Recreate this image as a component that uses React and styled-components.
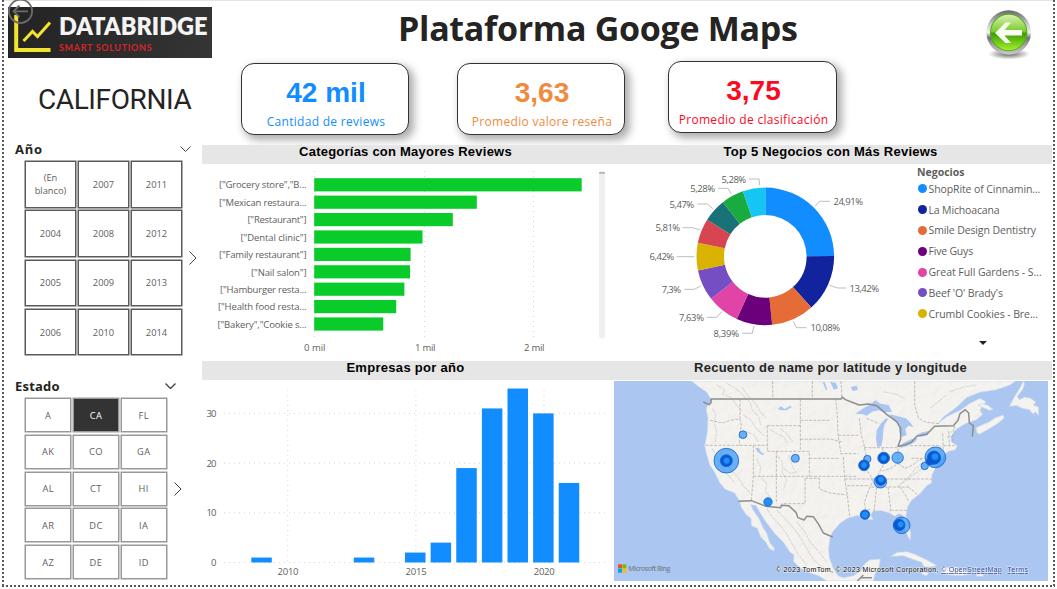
import React from "react";
import styled, { createGlobalStyle } from "styled-components";

const Global = createGlobalStyle`
  * { box-sizing: border-box; }
  body { margin: 0; background: #fff; overflow: hidden; font-family: "Open Sans", "Noto Sans", sans-serif; }
  svg { display: block; }
`;

const dots = (dir) =>
  `repeating-linear-gradient(to ${dir}, #5a5a5a 0 2px, transparent 2px 4px)`;

const Frame = styled.div`
  width: 1053px;
  height: 587px;
  margin-left: 2px;
  padding: 0 2px 2px;
  display: flex;
  flex-direction: column;
  background:
    ${dots("bottom")} left top / 2px 100% no-repeat,
    ${dots("bottom")} right top / 2px 100% no-repeat,
    ${dots("right")} left bottom / 100% 2px no-repeat,
    linear-gradient(#e4e4e4, #e4e4e4) left top / 100% 1px no-repeat;
`;

const Header = styled.header`
  height: 145px;
  flex: none;
  display: grid;
  grid-template-columns: 208px 1fr 84px;
`;
const Brand = styled.div`
  display: flex;
  flex-direction: column;
  padding: 7px 0 0 4px;
`;
const Logo = styled.div`
  position: relative;
  height: 51px;
  display: flex;
  padding-left: 5px;
  background: linear-gradient(100deg, #232323, #2b2b2b 50%, #353535);
`;
const LogoText = styled.div`
  padding: 5px 0 0 8px;
  display: flex;
  flex-direction: column;
  white-space: nowrap;
`;
const LogoName = styled.span`
  font: 800 23.5px/29px Lato, sans-serif;
  letter-spacing: 0;
  color: #f4f4f4;
`;
const LogoTag = styled.span`
  font: 700 9px/13px Lato, sans-serif;
  letter-spacing: 0.67px;
  color: #d3262b;
`;
const BackOverlay = styled.svg`
  position: absolute;
  left: -1px;
  top: -9px;
`;
const StateName = styled.div`
  margin: 25px 0 0 30px;
  font: 400 28px/34px Roboto, sans-serif;
  letter-spacing: -0.4px;
  color: #252423;
  white-space: nowrap;
`;
const Center = styled.div`
  display: flex;
  flex-direction: column;
`;
const Title = styled.h1`
  margin: 0 0 0 186px;
  height: 61px;
  font: 700 34px/57px "Open Sans", sans-serif;
  letter-spacing: -0.3px;
  color: #252423;
  white-space: nowrap;
`;
const Cards = styled.div`
  display: flex;
  padding-left: 29px;
`;
const Card = styled.div`
  width: ${(p) => p.$w || 168}px;
  height: 72px;
  margin: ${(p) => p.$top}px ${(p) => p.$gap}px 0 0;
  padding-left: 2px;
  border: 1px solid #333;
  border-radius: 13px;
  background: #fff;
  box-shadow: 4px 4px 9px 1px rgba(0, 0, 0, 0.33);
  color: ${(p) => p.$color};
  display: flex;
  flex-direction: column;
  align-items: center;
  white-space: nowrap;
`;
const CardValue = styled.div`
  margin-top: 12px;
  font: 700 28px/34px "Liberation Sans", sans-serif;
`;
const CardLabel = styled.div`
  font: 400 12px/24px "Open Sans", sans-serif;
  letter-spacing: 0.3px;
`;
const BackButton = styled.div`
  padding: 8px 0 0 17px;
`;

const Body = styled.div`
  flex: 1;
  display: flex;
`;
const Side = styled.aside`
  width: 198px;
  display: flex;
  flex-direction: column;
`;
const Slicer = styled.section`
  height: ${(p) => p.$h}px;
`;
const SlicerHead = styled.div`
  display: flex;
  align-items: center;
  justify-content: space-between;
  height: ${(p) => p.$h}px;
  padding: ${(p) => p.$pad};
  font: 700 13px/16px "Open Sans", sans-serif;
  letter-spacing: ${(p) => p.$ls}px;
  color: #252423;
`;
const SlicerRow = styled.div`
  display: flex;
  align-items: center;
  padding-left: 21px;
  gap: ${(p) => p.$gap}px;
`;
const Tiles = styled.div`
  display: grid;
  grid-template-columns: repeat(3, ${(p) => p.$w}px);
  grid-auto-rows: ${(p) => p.$h}px;
  gap: ${(p) => p.$gap};
`;
const Tile = styled.div`
  display: flex;
  align-items: center;
  justify-content: center;
  text-align: center;
  padding: 0 6px;
  border: 1px solid ${(p) => p.$line};
  box-shadow: 0 0 0 0.5px ${(p) => p.$line};
  background: ${(p) => (p.$on ? "#333" : "#fff")};
  color: ${(p) => (p.$on ? "#fff" : "#605e5c")};
  font: 400 9.3px/13px "Open Sans", sans-serif;
  letter-spacing: ${(p) => p.$ls || 0}px;
`;

const Main = styled.main`
  width: 850px;
  display: grid;
  grid-template-columns: 407px 443px;
  grid-template-rows: 216px 224px;
`;
const Panel = styled.section`
  display: flex;
  flex-direction: column;
  min-width: 0;
`;
const PanelTitle = styled.h2`
  margin: 0;
  height: 19px;
  flex: none;
  background: #e6e6e6;
  color: ${(p) => p.$color || "#000"};
  text-align: center;
  font: 700 13px/14px "Liberation Sans", sans-serif;
  letter-spacing: ${(p) => p.$ls}px;
  white-space: nowrap;
`;
const DonutRow = styled.div`
  display: flex;
`;
const Legend = styled.div`
  padding-top: 1px;
  width: 135px;
  color: #605e5c;
  white-space: nowrap;
`;
const LegendTitle = styled.div`
  font: 700 10.5px/14px "Open Sans", sans-serif;
  height: 13.5px;
`;
const LegendItem = styled.div`
  display: flex;
  align-items: center;
  gap: 1.5px;
  height: 20.8px;
  font: 400 10.5px/20px "Open Sans", sans-serif;
  letter-spacing: ${(p) => p.$ls || 0}px;
`;
const Dot = styled.span`
  width: 9px;
  height: 9px;
  margin-left: 1px;
  border-radius: 50%;
  background: ${(p) => p.$color};
`;
const More = styled.div`
  width: 0;
  margin: 17px 0 0 62px;
  border: 4.5px solid transparent;
  border-top-color: #252423;
  border-bottom-width: 0;
`;
const MapFrame = styled.div`
  padding: 1px 4px 0 5px;
`;
const ChartText = styled.text`
  font-family: "Open Sans", sans-serif;
  font-size: 9.5px;
  fill: #605e5c;
`;
const MapText = styled.text`
  font-family: "Liberation Sans", sans-serif;
  font-size: 21px;
  fill: ${(p) => p.$color || "#000"};
  paint-order: stroke;
  stroke: rgba(255, 255, 255, 0.75);
  stroke-width: 3px;
`;

const YEARS = ["(En blanco)", "2007", "2011", "2004", "2008", "2012", "2005", "2009", "2013", "2006", "2010", "2014"];
const STATES = ["A", "CA", "FL", "AK", "CO", "GA", "AL", "CT", "HI", "AR", "DC", "IA", "AZ", "DE", "ID"];

const CATS = [
  ['["Grocery store","B...', 581.7, 219],
  ['["Mexican restaura...', 476.8, 219],
  ['["Restaurant"]', 452.8, 247.5],
  ['["Dental clinic"]', 422.5, 240.5],
  ['["Family restaurant"]', 410.6, 219],
  ['["Nail salon"]', 410, 251],
  ['["Hamburger resta...', 404.4, 220],
  ['["Health food resta...', 396.2, 218],
  ['["Bakery","Cookie s...', 383.2, 217.5],
];

function BarChart() {
  return (
    <svg width="407" height="197" viewBox="202 164 407 197">
      {[[314.5, "0 mil", 304, 21.5], [424.5, "1 mil", 415, 20.5], [533.5, "2 mil", 524, 20.5]].map(([x, t, tx, w]) => (
        <g key={t}>
          <line x1={x} x2={x} y1="171" y2="339" stroke="#d6d6d6" strokeDasharray="1 4" />
          <ChartText x={tx} y="351" textLength={w}>{t}</ChartText>
        </g>
      ))}
      {CATS.map(([t, end, tx], i) => (
        <g key={t}>
          <rect x="314.2" y={178.2 + i * 17.4} width={end - 314.2} height="13.2" fill="#09cc2b" />
          <ChartText x={tx} y={188.3 + i * 17.45} textLength={306.5 - tx}>{t}</ChartText>
        </g>
      ))}
      <rect x="599" y="171" width="6" height="167.5" rx="3" fill="#efefef" />
      <rect x="599" y="172" width="6" height="1.8" rx="0.6" fill="#b3b3b3" />
    </svg>
  );
}

const SLICES = [
  [24.91, "#118DFF", 833.5, 29.5, 201.3, "815.3,206 819.3,201.3 830,201.3"],
  [13.42, "#12239E", 849.5, 29.5, 288.5, "829.3,285.3 837.7,288 846,288"],
  [10.08, "#E66C37", 810.5, 29.5, 327.7, "793.3,321.3 796.7,327.7 806.7,327.7"],
  [8.39, "#6B007B", 713.5, 25.5, 333.7, "754,326 752.3,333.3 742.3,333.3"],
  [7.63, "#E044A7", 679, 25, 317.3, "722,311.3 716.7,317.3 706.7,317.3"],
  [7.3, "#744EC2", 661.7, 19.3, 289.3, "700.7,286 694.3,289.3 684.3,289.3"],
  [6.42, "#D9B300", 649.5, 24.7, 256.7, "694.3,256.7 676.7,256.7"],
  [5.81, "#D64550", 655.5, 24.7, 227.7, "700,230 692.7,227.7 682.7,227.7"],
  [5.47, "#197278", 669.5, 24.7, 204.3, "713.3,209 707.3,204 697.3,204"],
  [5.28, "#1AAB40", 690.3, 24.7, 188.5, "731.3,194 728,188.3 718,188.3"],
  [5.28, "#15C6F4", 721.5, 24.7, 179.5, "759.7,185.3 759,179 749,179"],
];

function Donut() {
  const cx = 765.3, cy = 256.4, R = 68.8, r = 41.3;
  let acc = 0;
  const pt = (f, rad) => {
    const a = f * 2 * Math.PI;
    return `${(cx + rad * Math.sin(a)).toFixed(2)} ${(cy - rad * Math.cos(a)).toFixed(2)}`;
  };
  return (
    <svg width="308" height="197" viewBox="609 164 308 197">
      {SLICES.map(([v, color, tx, w, ty, line], i) => {
        const a = acc / 99.99;
        acc += v;
        const b = acc / 99.99;
        return (
          <g key={i}>
            <path d={`M${pt(a, R)}A${R} ${R} 0 0 1 ${pt(b, R)}L${pt(b, r)}A${r} ${r} 0 0 0 ${pt(a, r)}Z`} fill={color} />
            <polyline points={line} fill="none" stroke="#bdbdbd" />
            <ChartText x={tx} y={ty + 3.6} textLength={w}>{String(v).replace(".", ",") + "%"}</ChartText>
          </g>
        );
      })}
    </svg>
  );
}

const LEGEND = [
  ["ShopRite of Cinnamin...", "#118DFF", -0.1],
  ["La Michoacana", "#12239E", -0.15],
  ["Smile Design Dentistry", "#E66C37", -0.12],
  ["Five Guys", "#6B007B", -0.2],
  ["Great Full Gardens - S...", "#E044A7", -0.05],
  ["Beef 'O' Brady's", "#744EC2", -0.12],
  ["Crumbl Cookies - Bre...", "#D9B300", -0.08],
];

const COLUMNS = [[2009, 1], [2013, 1], [2015, 2], [2016, 4], [2017, 19], [2018, 31], [2019, 35], [2020, 30], [2021, 16]];

function ColumnChart() {
  return (
    <svg width="407" height="205" viewBox="202 380 407 205">
      {[0, 10, 20, 30].map((v) => {
        const y = 562.5 - v * 4.97;
        const w = v ? 10 : 5.5;
        return (
          <g key={v}>
            <line x1="224" x2="605" y1={y} y2={y} stroke="#d6d6d6" strokeDasharray="1 4" />
            <ChartText x={216.5 - w} y={y + 3.6} textLength={w}>{v}</ChartText>
          </g>
        );
      })}
      {[2010, 2015, 2020].map((v) => {
        const x = 287.8 + (v - 2010) * 25.62;
        return (
          <g key={v}>
            <line x1={x} x2={x} y1="390" y2="562" stroke="#d6d6d6" strokeDasharray="1 4" />
            <ChartText x={x - 10.3} y="575.3" textLength="21">{v}</ChartText>
          </g>
        );
      })}
      {COLUMNS.map(([yr, v]) => (
        <rect key={yr} x={251.3 + (yr - 2009) * 25.62} y={562.5 - v * 4.97} width="20.5" height={v * 4.97} fill="#118DFF" />
      ))}
    </svg>
  );
}

const LAND =
  "M244 78L262 92 290 112 300 128 305 140 292 152 288 165 294 190 291 235 284 272 290 300 299 330 314 352 328 382 345 403 374 414 388 438 394 458 409 480 423 490 424 512 442 520 452 546 468 562 477 580 492 588 493 580 479 562 471 536 458 515 448 492 430 466 422 449 438 452 452 476 464 496 482 520 498 540 520 562 540 592 552 600 550 618 565 635 592 652 625 662 650 678 790 678 796 655 808 634 811 612 780 614 764 626 752 648 730 662 700 668 684 662 670 640 658 606 656 580 660 550 668 530 690 505 712 490 740 482 760 484 775 493 790 494 782 480 790 468 815 467 838 474 855 484 866 476 880 482 880 510 887 530 896 548 902 556 902 532 892 500 888 480 893 455 905 436 930 416 950 392 965 384 966 360 976 340 990 320 1002 300 1014 290 1036 284 1042 272 1026 262 1022 245 1040 222 1066 206 1100 194 1118 178 1110 166 1120 150 1128 140 1110 130 1080 145 1050 166 1010 185 985 205 1000 186 1040 156 1070 128 1110 112 1160 104 1200 90 1218 78Z";
const ISLANDS = [
  "M1098 218L1120 208 1135 202 1156 188 1180 180 1182 190 1160 208 1130 226 1108 238 1100 232Z",
  "M1104 150L1120 146 1136 152 1150 164 1138 166 1120 158Z",
  "M1240 78L1230 98 1214 124 1198 154 1220 152 1236 160 1258 164 1270 178 1276 170 1286 182 1286 156 1270 150 1278 142 1262 130 1244 126 1228 134 1222 124 1238 104 1244 86Z",
  "M842 604L862 592 892 590 915 598 945 612 982 632 958 636 940 634 935 622 905 612 880 602 860 604Z",
  "M1000 638L1040 636 1068 646 1084 658 1050 662 1020 660 994 656Z",
  "M934 650L956 654 950 662 936 658Z",
  "M1098 656L1120 656 1120 664 1100 664Z",
];
const LAKES = [
  "M736 176L760 160 782 148 796 136 812 146 836 150 846 170 822 172 806 166 786 170 770 182 758 178Z",
  "M802 276L798 252 800 226 812 206 826 192 836 190 824 208 820 226 818 252 814 274Z",
  "M838 178L864 184 888 190 904 206 910 216 896 212 886 222 890 240 876 246 868 232 866 208 850 196Z",
  "M864 276L884 262 906 252 924 248 916 260 894 272 874 278Z",
  "M920 240L936 232 958 228 954 240 932 245Z",
  "M436 280L446 278 452 290 464 298 456 300 444 292Z",
  "M504 162L512 154 524 162 540 152 546 156 528 166 512 166Z",
  "M638 82L644 80 652 104 648 106Z",
  "M660 80L678 84 684 100 672 104Z",
  "M722 96L740 92 744 104 728 108Z",
  "M234 92L262 96 288 118 300 132 296 140 270 124 250 104Z",
];
const STATES_PATH =
  "M390 132V192M300 196L338 204 360 196 390 192 394 212 388 240V271M286 271H472M472 212V289M472 212H571M571 132V289M571 196H660M571 253L660 252 700 262M472 289H598V364M430 271V364L424 436M430 364H740M499 289V446M585 370V446H515M585 370H628V402L660 414 712 420M598 310H690M660 252M677 130L682 180 684 240 692 290M684 241H748M690 296H745M700 306L704 372 712 420 716 460 720 488M704 372H790M712 392H778M748 190L754 240 762 270 768 300 756 330 782 362 788 380 774 410 764 440 766 464H784M818 278V334L804 360M864 280V326L842 340 818 348M762 278H862M790 372H966M784 396H895M800 396L792 470M834 396L842 460 838 472M842 466H890M870 396L886 420 896 440M895 396L924 420M864 326L886 340 908 330 930 312 940 318 960 330M900 272H990L996 300M904 310H990M998 236L1000 290M1016 228L1018 270M1034 212L1026 262M1000 272H1034M488 78V132M607 78V132M693 78L696 130M914 78L914 150 926 190 948 202 990 206M770 190L808 206";
const RANGES =
  "M320 90L345 104 338 118 362 126 380 150 396 170M350 84L376 100 394 116 420 142 428 166 446 186 452 210M396 96L412 120 440 150 452 172 470 190M306 160L318 178 312 204 320 230 316 262M400 180L424 196 440 222 462 242M410 230L432 240 446 262M306 280L318 300 330 330 350 356 372 380M330 290L346 318 360 344 384 366 400 394 420 412M480 222L500 236 522 246 530 264M510 220L530 236 548 260M500 300L518 322 516 350 530 376 520 404M440 310L452 336 448 362 470 386 466 410 484 430M520 340L544 356 560 350M536 300L546 330 556 352M470 460L490 490 510 510 532 540 548 570 566 600 590 630M500 465L524 490 548 516 572 548 590 580 610 614 640 640M560 500L584 530 600 560 626 590 650 620M860 396L884 380 906 362 930 346 950 320M870 388L896 366 914 344 938 322M1010 250L1020 236 1036 216M960 160L984 140 1010 120M820 110L860 118 884 130M1020 110L1060 96 1100 90";
const US_CANADA =
  "M280 141L297 149 303 143 303 132H694L697 126 706 134 732 144 748 150 776 147 800 152 830 178 860 200 872 220 872 252 864 274 884 270 904 262 920 244 950 238 974 214 1030 212 1044 196 1050 176 1066 164 1076 174 1078 204 1090 212 1087 245";
const US_MEXICO =
  "M385 439L424 437 468 454 512 458 514 451 536 452 558 472 564 488 582 495 590 484 610 485 626 508 640 534 668 546M742 678L752 668 786 668M752 668L760 660";

const BUBBLES = [
  [349, 317, 37, 0], [349, 317, 18, 2], [350, 317, 10, 1],
  [399, 239, 11.5, 0], [556, 310, 12, 0], [474, 441, 12.5, 1],
  [772, 312, 11, 0], [762, 331, 16, 2], [762, 330, 9.5, 1],
  [821, 309, 17.5, 2], [821, 309, 9.5, 1], [863, 308, 17, 0],
  [976, 307, 31, 0], [944, 333, 11, 0], [960, 319, 11, 2], [972, 308, 20, 2], [975, 305, 11, 1],
  [811, 380, 19, 0], [812, 376, 15, 2], [813, 373, 10, 1],
  [765, 479, 14, 2], [765, 479, 11, 1],
  [875, 511, 25, 0], [868, 510, 17, 2], [872, 508, 10, 1],
];
const BUBBLE_FILL = ["rgba(40,145,250,0.68)", "#1e90fb", "#0859cf"];

function BingMap() {
  return (
    <svg width="434" height="200" viewBox="12 78 1302 600">
      <defs>
        <clipPath id="land"><path d={LAND} /></clipPath>
        <filter id="relief" x="0" y="0" width="1" height="1">
          <feTurbulence type="fractalNoise" baseFrequency="0.035" numOctaves="4" seed="8" />
          <feDiffuseLighting surfaceScale="9" lightingColor="#fff">
            <feDistantLight azimuth="225" elevation="55" />
          </feDiffuseLighting>
        </filter>
      </defs>
      <rect x="12" y="78" width="1302" height="600" fill="#abc6f1" />
      <g fill="#f4f3f0" stroke="#c6d5ec" strokeWidth="2">
        <path d={LAND} />
        {ISLANDS.map((d) => <path key={d} d={d} />)}
      </g>
      <g clipPath="url(#land)">
        <rect x="230" y="78" width="1000" height="600" filter="url(#relief)" opacity="0.06" />
        <path d={RANGES} fill="none" stroke="#dddbd6" strokeWidth="3.5" strokeLinejoin="round" strokeDasharray="17 3 9 2" />
      </g>
      <g fill="#abc6f1">{LAKES.map((d) => <path key={d} d={d} />)}</g>
      <path d={STATES_PATH} fill="none" stroke="#b5b0a9" strokeWidth="2.4" strokeDasharray="9 4" />
      <path d={US_CANADA} fill="none" stroke="#8d8d8d" strokeWidth="4.5" strokeLinejoin="round" />
      <path d={US_MEXICO} fill="none" stroke="#8d8d8d" strokeWidth="4.5" strokeLinejoin="round" />
      {BUBBLES.map(([x, y, r, k], i) => (
        <circle key={i} cx={x} cy={y} r={r} fill={BUBBLE_FILL[k]} stroke="#1264d2" strokeWidth="2.5" />
      ))}
      <rect x="24" y="628" width="12" height="12" fill="#f25022" />
      <rect x="37" y="628" width="12" height="12" fill="#7fba00" />
      <rect x="24" y="641" width="12" height="12" fill="#00a4ef" />
      <rect x="37" y="641" width="12" height="12" fill="#ffb900" />
      <text x="55" y="648" textLength="126" fontSize="21" fontFamily="Open Sans, sans-serif" fontWeight="600" fill="#7c8593">Microsoft Bing</text>
      <MapText x="497" y="651" textLength="488">© 2023 TomTom, © 2023 Microsoft Corporation,</MapText>
      <MapText x="993" y="651" textLength="182" $color="#1b3a94" textDecoration="underline">© OpenStreetMap</MapText>
      <MapText x="1192" y="651" textLength="62" $color="#1b3a94" textDecoration="underline">Terms</MapText>
    </svg>
  );
}

function GreenBack() {
  return (
    <svg width="46" height="54" viewBox="0 0 46 54">
      <defs>
        <linearGradient id="rim" x1="0" y1="0" x2="0" y2="1">
          <stop offset="0" stopColor="#666" />
          <stop offset="0.3" stopColor="#c4c4c4" />
          <stop offset="0.5" stopColor="#f2f2f2" />
          <stop offset="0.62" stopColor="#727272" />
          <stop offset="0.8" stopColor="#aaa" />
          <stop offset="1" stopColor="#c8c8c8" />
        </linearGradient>
        <linearGradient id="green" x1="0" y1="0" x2="0" y2="1">
          <stop offset="0" stopColor="#d7f2b0" />
          <stop offset="0.48" stopColor="#79cb28" />
          <stop offset="0.52" stopColor="#3b9d04" />
          <stop offset="1" stopColor="#a3f02c" />
        </linearGradient>
        <radialGradient id="shade">
          <stop offset="0" stopColor="#444" stopOpacity="0.85" />
          <stop offset="1" stopColor="#444" stopOpacity="0" />
        </radialGradient>
      </defs>
      <ellipse cx="23" cy="46" rx="21" ry="5.5" fill="url(#shade)" />
      <circle cx="22.7" cy="24.5" r="22.3" fill="url(#rim)" />
      <circle cx="22.7" cy="24.5" r="18.7" fill="#56a81c" />
      <circle cx="22.7" cy="24.5" r="17.8" fill="url(#green)" />
      <path d="M9 25L19.5 14.6H25L18.5 22H36V27.6H18.5L25 35H19.5Z" fill="#f8fff2" />
    </svg>
  );
}

const Chevron = ({ w = 11, h = 6, d = "M0.5 0.5L5.5 5.5 10.5 0.5", stroke = 1 }) => (
  <svg width={w} height={h} viewBox={`0 0 ${w} ${h}`} fill="none" stroke="#444" strokeWidth={stroke}>
    <path d={d} />
  </svg>
);

export default function App() {
  return (
    <>
      <Global />
      <Frame>
        <Header>
          <Brand>
            <Logo>
              <svg width="38" height="51" viewBox="0 0 38 51" fill="none" stroke="#f2e42e">
                <path d="M3.2 8V43H37.5" strokeWidth="4" />
                <path d="M10.5 34L19.5 24.5 24.5 29.5 37 15.5" strokeWidth="3" />
              </svg>
              <LogoText>
                <LogoName>DATABRIDGE</LogoName>
                <LogoTag>SMART SOLUTIONS</LogoTag>
              </LogoText>
              <BackOverlay width="27" height="27" viewBox="0 0 27 27" fill="none" stroke="#6b6b6b" strokeWidth="1.8">
                <circle cx="13.5" cy="13.3" r="11.6" />
                <path d="M21 13.3H6.5M12.5 7.5L6.5 13.3 12.5 19" />
              </BackOverlay>
            </Logo>
            <StateName>CALIFORNIA</StateName>
          </Brand>
          <Center>
            <Title>Plataforma Googe Maps</Title>
            <Cards>
              <Card $top={2} $gap={48} $color="#118DFF">
                <CardValue>42 mil</CardValue>
                <CardLabel>Cantidad de reviews</CardLabel>
              </Card>
              <Card $top={2} $gap={43} $color="#F08A3C">
                <CardValue>3,63</CardValue>
                <CardLabel>Promedio valore reseña</CardLabel>
              </Card>
              <Card $top={0} $gap={0} $w={169} $color="#FB0A1E">
                <CardValue>3,75</CardValue>
                <CardLabel>Promedio de clasificación</CardLabel>
              </Card>
            </Cards>
          </Center>
          <BackButton><GreenBack /></BackButton>
        </Header>
        <Body>
          <Side>
            <Slicer $h={233}>
              <SlicerHead $h={16} $pad="0 11px 9px 11px" $ls={0.8}>Año <Chevron /></SlicerHead>
              <SlicerRow $gap={7}>
                <Tiles $w={51} $h={46.5} $gap="2.8px 2px">
                  {YEARS.map((y) => <Tile key={y} $line="#5a5a5a">{y}</Tile>)}
                </Tiles>
                <Chevron w={8} h={14} d="M0.5 0.5L7 7 0.5 13.5" />
              </SlicerRow>
            </Slicer>
            <Slicer $h={200}>
              <SlicerHead $h={20} $pad="0 26px 4px 11px" $ls={0.2}>Estado <Chevron stroke={1.4} /></SlicerHead>
              <SlicerRow $gap={7}>
                <Tiles $w={46.3} $h={34} $gap="2.75px 1.5px">
                  {STATES.map((s) => <Tile key={s} $ls={0.4} $on={s === "CA"} $line="#999">{s}</Tile>)}
                </Tiles>
                <Chevron w={8} h={14} d="M0.5 0.5L7 7 0.5 13.5" />
              </SlicerRow>
            </Slicer>
          </Side>
          <Main>
            <Panel>
              <PanelTitle $ls={0.23}>Categorías con Mayores Reviews</PanelTitle>
              <BarChart />
            </Panel>
            <Panel>
              <PanelTitle $ls={0.23}>Top 5 Negocios con Más Reviews</PanelTitle>
              <DonutRow>
                <Donut />
                <Legend>
                  <LegendTitle>Negocios</LegendTitle>
                  {LEGEND.map(([t, c, ls]) => (
                    <LegendItem key={t} $ls={ls}><Dot $color={c} />{t}</LegendItem>
                  ))}
                  <More />
                </Legend>
              </DonutRow>
            </Panel>
            <Panel>
              <PanelTitle $ls={0.3}>Empresas por año</PanelTitle>
              <ColumnChart />
            </Panel>
            <Panel>
              <PanelTitle $ls={0.24} $color="#252423">Recuento de name por latitude y longitude</PanelTitle>
              <MapFrame><BingMap /></MapFrame>
            </Panel>
          </Main>
        </Body>
      </Frame>
    </>
  );
}
